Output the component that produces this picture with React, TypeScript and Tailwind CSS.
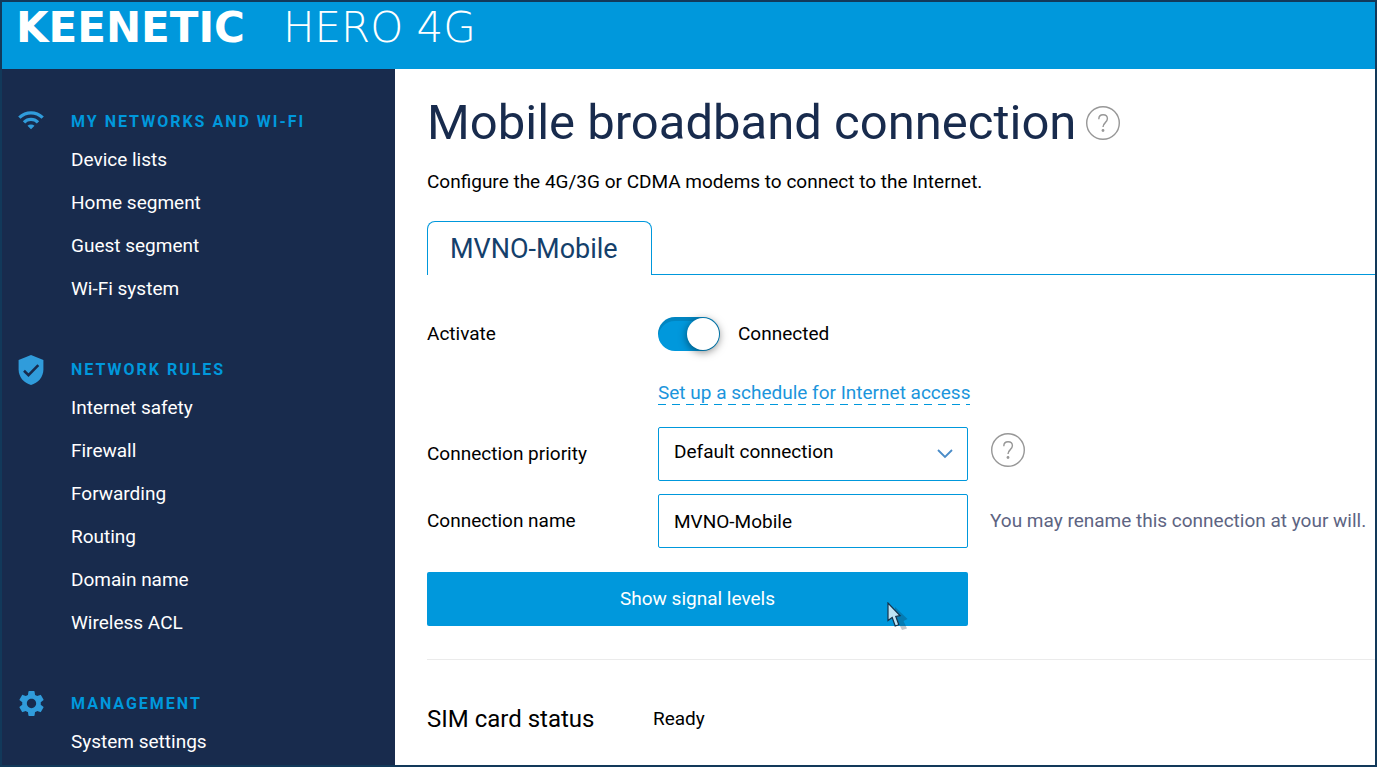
import { useState } from "react";
import type { ReactNode } from "react";
import { MdSettings, MdWifi } from "react-icons/md";

function ShieldIcon() {
  return (
    <svg width="26" height="30" viewBox="0 0 26 30" aria-hidden="true">
      <path
        d="M13 0 25.400 5v9.500C25.400 22 20 28.200 13 30 6 28.200.600 22 .600 14.500V5z"
        fill="#309cdb"
      />
      <path
        d="m6 15.800 4.500 4.400L20.300 10.200"
        fill="none"
        stroke="#182b4d"
        strokeWidth="2.600"
      />
    </svg>
  );
}

const menu = [
  {
    title: "My networks and Wi-Fi",
    icon: <MdWifi size={28} className="mb-1" />,
    items: ["Device lists", "Home segment", "Guest segment", "Wi-Fi system"],
  },
  {
    title: "Network rules",
    icon: <ShieldIcon />,
    items: [
      "Internet safety",
      "Firewall",
      "Forwarding",
      "Routing",
      "Domain name",
      "Wireless ACL",
    ],
  },
  {
    title: "Management",
    icon: <MdSettings size={31} />,
    items: ["System settings"],
  },
];

function HelpButton({ label }: { label: string }) {
  return (
    <button type="button" aria-label={label} className="shrink-0">
      <svg width="34" height="34" viewBox="0 0 34 34" fill="none">
        <circle cx="17" cy="17" r="16.300" stroke="#979797" strokeWidth="1.400" />
        <path
          d="M12.800 13.200c0-2.800 1.800-4.400 4.300-4.400s4.300 1.600 4.300 4c0 3.800-4.400 3.900-4.400 8.200"
          stroke="#979797"
          strokeWidth="1.400"
        />
        <circle cx="17" cy="24.500" r="1.400" fill="#979797" />
      </svg>
    </button>
  );
}

function Row({
  label,
  htmlFor,
  children,
}: {
  label: string;
  htmlFor: string;
  children: ReactNode;
}) {
  return (
    <div className="flex items-center">
      <label htmlFor={htmlFor} className="w-[231px] shrink-0">
        {label}
      </label>
      {children}
    </div>
  );
}

export default function App() {
  const [active, setActive] = useState(true);
  const [name, setName] = useState("MVNO-Mobile");

  return (
    <div className="flex min-h-screen flex-col border-2 border-[#12395a] bg-white font-['Roboto',sans-serif] text-[19px] leading-6 text-black">
      <header className="flex h-[67px] items-start gap-[38px] bg-[#0098dc] px-[14px] pt-1 font-['DejaVu_Sans',sans-serif] text-[42px] leading-[44px] text-white">
        <span className="font-bold">KEENETIC</span>
        <span className="font-extralight">HERO 4G</span>
      </header>

      <div className="flex grow">
        <nav className="flex w-[393px] shrink-0 flex-col gap-[43px] bg-[#182b4d] pt-9 text-white">
          {menu.map((group) => (
            <section key={group.title}>
              <div className="flex h-[33px] items-center">
                <span className="flex w-[58px] shrink-0 justify-center text-[#309cdb]">
                  {group.icon}
                </span>
                <h2 className="pl-[11px] text-[16px] font-bold tracking-[2px] text-[#0098dc] uppercase">
                  {group.title}
                </h2>
              </div>
              <ul>
                {group.items.map((item) => (
                  <li key={item} className="flex h-[43px] items-center pl-[69px]">
                    <a href="#">{item}</a>
                  </li>
                ))}
              </ul>
            </section>
          ))}
        </nav>

        <main className="min-w-0 grow pt-[22px] pl-8">
          <div className="flex items-center gap-2.5">
            <h1 className="text-[49px] leading-[64px] text-[#182b4d]">
              Mobile broadband connection
            </h1>
            <HelpButton label="About mobile broadband" />
          </div>
          <p className="mt-[15px]">
            Configure the 4G/3G or CDMA modems to connect to the Internet.
          </p>

          <div className="mt-[27px] flex" role="tablist">
            <button
              type="button"
              role="tab"
              aria-selected="true"
              className="h-[54px] w-[225px] rounded-t-lg border border-b-0 border-[#0098dc] pl-[22px] text-left text-[27px] text-[#14406b]"
            >
              MVNO-Mobile
            </button>
            <div className="grow border-b border-[#0098dc]" />
          </div>

          <div className="mt-[42px]">
            <Row label="Activate" htmlFor="activate">
              <input
                id="activate"
                type="checkbox"
                role="switch"
                checked={active}
                onChange={(e) => setActive(e.target.checked)}
                className="h-[34px] w-[62px] appearance-none rounded-full bg-gray-300 shadow-[inset_0_4px_0_rgba(0,0,0,0.12)] before:m-px before:block before:size-8 before:rounded-full before:bg-white before:shadow-[0_2px_8px_rgba(0,0,0,0.5)] checked:bg-[#0098dc] checked:before:ml-[29px]"
              />
              <span className="ml-[18px]">
                {active ? "Connected" : "Disconnected"}
              </span>
            </Row>
          </div>

          <div className="mt-[30px] flex pl-[231px]">
            <a
              href="#"
              className="bg-[repeating-linear-gradient(90deg,#0098dc_0_8px,transparent_8px_14px)] bg-[length:100%_1px] bg-bottom bg-no-repeat text-[#1b95dc]"
            >
              Set up a schedule for Internet access
            </a>
          </div>

          <div className="mt-[22px] flex flex-col gap-[13px]">
            <Row label="Connection priority" htmlFor="priority">
              <div className="relative w-[310px] shrink-0">
                <select
                  id="priority"
                  className="block h-[54px] w-full appearance-none rounded-xs border border-[#0098dc] bg-white px-[15px] pb-1"
                >
                  <option>Default connection</option>
                </select>
                <svg
                  className="pointer-events-none absolute top-[22px] right-[15px]"
                  width="16"
                  height="10"
                  viewBox="0 0 16 10"
                  fill="none"
                  aria-hidden="true"
                >
                  <path d="m1 1 7 7 7-7" stroke="#4a8cc8" strokeWidth="1.800" />
                </svg>
              </div>
              <div className="-mt-2 ml-[23px] flex">
                <HelpButton label="About connection priority" />
              </div>
            </Row>
            <Row label="Connection name" htmlFor="name">
              <input
                id="name"
                type="text"
                value={name}
                onChange={(e) => setName(e.target.value)}
                className="h-[54px] w-[310px] shrink-0 rounded-xs border border-[#0098dc] px-[15px]"
              />
              <span className="ml-[22px] text-[#5d6482]">
                You may rename this connection at your will.
              </span>
            </Row>
          </div>

          <div className="relative mt-6 w-[541px]">
            <button
              type="button"
              className="block h-[54px] w-full rounded-xs bg-[#0098dc] text-white"
            >
              Show signal levels
            </button>
            <svg
              className="pointer-events-none absolute top-[30px] right-[57px]"
              width="24"
              height="30"
              viewBox="0 0 24 30"
              aria-hidden="true"
            >
              <path
                d="M8 5 20.500 17l-4 2 3.500 7.500-5 1.500-3.500-7L8 23z"
                fill="#123"
                opacity="0.250"
              />
              <path
                d="M1 1v17.500l4.200-3 3 8.500 3.600-1.300-3-8.200 4.200-.800z"
                fill="#bfe3f3"
                stroke="#16324a"
                strokeWidth="1.200"
              />
            </svg>
          </div>

          <hr className="mt-[33px] border-[#ebebeb]" />

          <div className="mt-[43px] flex items-center">
            <h3 className="w-[226px] text-[24px] leading-8">SIM card status</h3>
            <span>Ready</span>
          </div>
        </main>
      </div>
    </div>
  );
}
